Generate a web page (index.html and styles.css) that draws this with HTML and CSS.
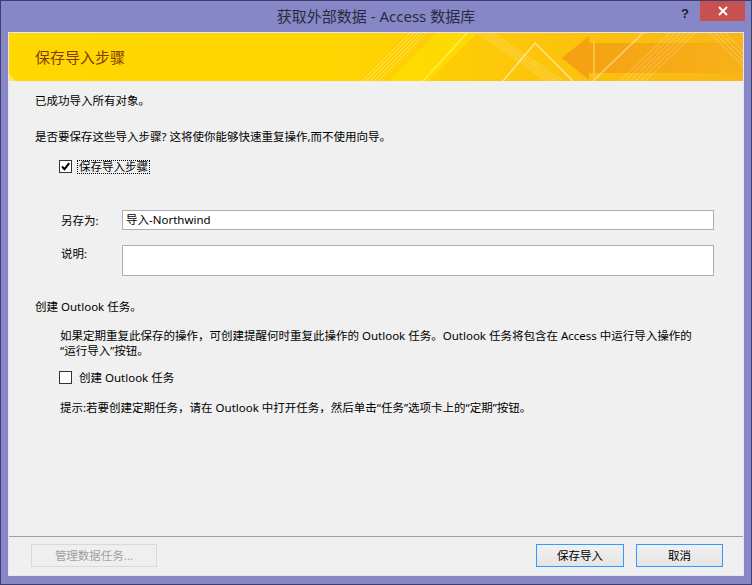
FILE: index.html
```html
<!DOCTYPE html>
<html lang="zh-CN">
<head>
    <meta charset="UTF-8">
    <meta name="viewport" content="width=device-width, initial-scale=1.0">
    <title>获取外部数据 - Access 数据库</title>
    <link rel="stylesheet" href="styles.css">
</head>
<body>
    <div class="window">
        <div class="titlebar">
            <span></span>
            <div class="title">获取外部数据 - Access 数据库</div>
            <div class="controls">
                <span class="help">?</span>
                <span class="close">
                    <svg width="10" height="10" viewBox="0 0 10 10"><path d="M1 1L9 9M9 1L1 9" stroke="#fff" stroke-width="2"/></svg>
                </span>
            </div>
        </div>

        <div class="dialog">
            <div class="banner">
                <svg class="banner-art" viewBox="0 0 734 48" preserveAspectRatio="none">
                    <defs>
                        <linearGradient id="arrow" x1="0" x2="1">
                            <stop offset="0" stop-color="#f39a12"/>
                            <stop offset="1" stop-color="#f8b01a"/>
                        </linearGradient>
                    </defs>
                    <polygon points="0,41 7,48 0,48" fill="#ffe97a" opacity=".7"/>
                    <polygon points="380,48 420,48 468,0 428,0" fill="#ffe200" opacity=".6"/>
                    <g stroke="#fff" stroke-opacity=".35">
                        <line x1="353" y1="48" x2="401" y2="0"/>
                        <line x1="357" y1="48" x2="405" y2="0"/>
                        <line x1="361" y1="48" x2="409" y2="0"/>
                        <line x1="365" y1="48" x2="413" y2="0"/>
                        <line x1="369" y1="48" x2="417" y2="0"/>
                    </g>
                    <line x1="414" y1="48" x2="458" y2="0" stroke="#fff04a" stroke-width="1.5"/>
                    <g stroke="#fff" stroke-opacity=".3">
                        <line x1="468" y1="0" x2="538" y2="48"/>
                        <line x1="472" y1="0" x2="542" y2="48"/>
                        <line x1="476" y1="0" x2="546" y2="48"/>
                        <line x1="480" y1="0" x2="550" y2="48"/>
                        <line x1="484" y1="0" x2="554" y2="48"/>
                    </g>
                    <polyline points="494,48 526,10 564,48" fill="none" stroke="#fff" stroke-opacity=".55" stroke-width="1.5"/>
                    <polygon points="553,25 580,3 580,10 734,10 734,40 580,40 580,47" fill="url(#arrow)" opacity=".85"/>
                    <line x1="585" y1="5" x2="585" y2="45" stroke="#fcc43a" stroke-width="2"/>
                    <line x1="584" y1="48" x2="634" y2="0" stroke="#fff" stroke-opacity=".45" stroke-width="1.5"/>
                    <g stroke="#fff" stroke-opacity=".3">
                        <line x1="611" y1="48" x2="661" y2="0"/>
                        <line x1="616" y1="48" x2="666" y2="0"/>
                        <line x1="621" y1="48" x2="671" y2="0"/>
                        <line x1="626" y1="48" x2="676" y2="0"/>
                        <line x1="631" y1="48" x2="681" y2="0"/>
                        <line x1="636" y1="48" x2="686" y2="0"/>
                    </g>
                    <g stroke="#fff" stroke-opacity=".3">
                        <line x1="701" y1="0" x2="749" y2="48"/>
                        <line x1="706" y1="0" x2="754" y2="48"/>
                        <line x1="711" y1="0" x2="759" y2="48"/>
                        <line x1="716" y1="0" x2="764" y2="48"/>
                    </g>
                </svg>
                <div class="banner-title">保存导入步骤</div>
            </div>

            <div class="main">
                <p class="line done">已成功导入所有对象。</p>
                <p class="line ask">是否要保存这些导入步骤? 这将使你能够快速重复操作,而不使用向导。</p>

                <div class="check-row save-steps">
                    <span class="box">
                        <svg width="11" height="11" viewBox="0 0 11 11"><path d="M2 5.5L4.5 8.2L9.2 2.2" fill="none" stroke="#000" stroke-width="2"/></svg>
                    </span>
                    <span class="focus">保存导入步骤</span>
                </div>

                <div class="field name">
                    <span class="field-label">另存为:</span>
                    <div class="input">导入-Northwind</div>
                </div>

                <div class="field note">
                    <span class="field-label">说明:</span>
                    <div class="input textarea"></div>
                </div>

                <p class="line outlook">创建 Outlook 任务。</p>
                <p class="line info">如果定期重复此保存的操作，可创建提醒何时重复此操作的 Outlook 任务。Outlook 任务将包含在 Access 中运行导入操作的<br>“运行导入”按钮。</p>

                <div class="check-row task">
                    <span class="box"></span>
                    <span>创建 Outlook 任务</span>
                </div>

                <p class="line hint">提示:若要创建定期任务，请在 Outlook 中打开任务，然后单击“任务”选项卡上的“定期”按钮。</p>
            </div>

            <div class="footer">
                <button class="btn manage" disabled>管理数据任务...</button>
                <button class="btn save">保存导入</button>
                <button class="btn cancel">取消</button>
            </div>
        </div>
    </div>
</body>
</html>
```

FILE: styles.css
```css
* {
    box-sizing: border-box;
}

html, body {
    margin: 0;
}

body {
    width: 752px;
    height: 585px;
    overflow: hidden;
    font-family: "Noto Sans", "Noto Sans CJK SC", sans-serif;
    font-size: 11.5px;
    color: #000;
}

.window {
    height: 585px;
    border: 1px solid #3d3d72;
    background-color: #8787c8;
    display: flex;
    flex-direction: column;
}

.titlebar {
    height: 31px;
    display: grid;
    grid-template-columns: 1fr auto 1fr;
    padding: 0 6px;
}

.title {
    font-size: 15px;
    line-height: 30px;
    color: #2b2b3c;
}

.controls {
    justify-self: end;
    display: flex;
    align-items: flex-start;
}

.help {
    font: bold 13px "Liberation Sans", sans-serif;
    color: #222;
    margin-top: 5px;
    margin-right: 11px;
}

.close {
    width: 45px;
    height: 20px;
    background-color: #c75050;
    display: flex;
    align-items: center;
    justify-content: center;
}

.dialog {
    flex: 1;
    margin: 0 7px 8px;
    border: 1px solid #e6e6f2;
    background-color: #f0f0f0;
    display: flex;
    flex-direction: column;
}

.banner {
    height: 48px;
    display: grid;
    background: linear-gradient(90deg, #ffd800 0%, #ffd500 45%, #fdc60a 70%, #f9b616 100%);
}

.banner > * {
    grid-area: 1 / 1;
}

.banner-art {
    width: 100%;
    height: 48px;
    display: block;
}

.banner-title {
    font-size: 15px;
    line-height: 48px;
    padding-left: 26px;
    color: #833c00;
}

.main {
    flex: 1;
    padding: 0 29px 0 26px;
}

.line {
    margin: 0;
    line-height: 15px;
    white-space: nowrap;
}

.done {
    margin-top: 12px;
}

.ask {
    margin-top: 21px;
}

.check-row {
    display: flex;
    align-items: center;
    height: 15px;
    margin-left: 24px;
    line-height: 15px;
}

.save-steps {
    margin-top: 15px;
    gap: 5px;
}

.task {
    margin-top: 12px;
    gap: 7px;
}

.box {
    width: 13px;
    height: 13px;
    border: 1px solid #333;
    background-color: #fff;
    display: flex;
    align-items: center;
    justify-content: center;
}

.focus {
    border: 1px dotted #000;
    line-height: 12px;
    padding: 0 1px;
}

.field {
    display: flex;
    margin-left: 26px;
}

.field-label {
    width: 61px;
    line-height: 15px;
}

.name {
    margin-top: 36px;
    align-items: center;
}

.note {
    margin-top: 15px;
    align-items: flex-start;
}

.note .field-label {
    padding-top: 1px;
}

.input {
    flex: 1;
    height: 20px;
    border: 1px solid #abadb3;
    background-color: #fff;
    padding-left: 3px;
    line-height: 18px;
}

.textarea {
    height: 31px;
}

.outlook {
    margin-top: 23px;
}

.info {
    margin-top: 14px;
    margin-left: 25px;
}

.hint {
    margin-top: 15px;
    margin-left: 25px;
}

.footer {
    border-top: 1px solid #a0a0a0;
    padding: 7px 20px 8px 22px;
    display: flex;
    gap: 12px;
}

.btn {
    height: 23px;
    font: inherit;
    color: #000;
    line-height: 21px;
    padding: 0;
    text-align: center;
    border: 1px solid #3399ff;
    background: linear-gradient(#f1f1f1, #e4e4e4);
}

.manage {
    width: 126px;
    margin-right: auto;
    border-color: #d9d9d9;
    color: #a0a0a0;
    background: #efefef;
}

.save {
    width: 88px;
}

.cancel {
    width: 87px;
}
```
